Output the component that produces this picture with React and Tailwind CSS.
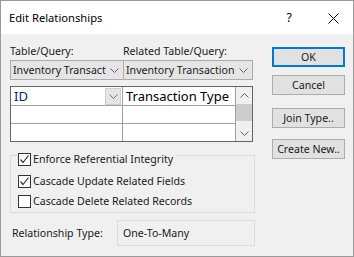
import React from "react";

const Chevron = ({ down = true, className = "" }) => (
  <svg width="9" height="5" viewBox="0 0 9 5" className={className}>
    <polyline
      points={down ? "0.5,0.5 4.5,4.5 8.5,0.5" : "0.5,4.5 4.5,0.5 8.5,4.5"}
      fill="none"
      stroke="currentColor"
      strokeWidth="1"
    />
  </svg>
);

const Combo = ({ text, width }) => (
  <div className={`${width} h-[20px] flex items-center bg-[#e5e5e5] border border-[#acacac] pl-[2px] pr-[4px]`}>
    <span className="flex-1 min-w-0 overflow-hidden whitespace-nowrap text-[10.6px] leading-[15px] text-[#1a1a1a]">{text}</span>
    <Chevron className="text-[#606060] shrink-0 ml-[3px]" />
  </div>
);

const Check = ({ checked, label, className = "" }) => (
  <div className={`flex items-center ${className}`}>
    <div className="w-[13px] h-[13px] border border-[#333333] bg-white flex items-center justify-center shrink-0">
      {checked && (
        <svg width="11" height="11" viewBox="0 0 11 11">
          <polyline points="1.5,5.5 4,8.5 9.5,1.5" fill="none" stroke="#333333" strokeWidth="1.2" />
        </svg>
      )}
    </div>
    <span className="ml-[2px] pr-[3px] text-[10.6px] leading-none text-[#1a1a1a] bg-[#f0f0f0] whitespace-nowrap">{label}</span>
  </div>
);

const Btn = ({ children, primary, className = "" }) => (
  <div
    className={`w-[73px] h-[20px] flex items-center justify-center bg-[#e1e1e1] text-[10.6px] leading-none text-[#1a1a1a] whitespace-nowrap ${
      primary ? "border-2 border-[#0078d7]" : "border border-[#adadad]"
    } ${className}`}
  >
    {children}
  </div>
);

export default function App() {
  return (
    <div className="w-[354px] h-[257px] border border-[#9a9a9a] bg-[#f0f0f0] flex flex-col font-['Noto_Sans',sans-serif]">
      {/* Title bar */}
      <div className="h-[33px] pt-[2px] bg-white flex items-center shrink-0">
        <span className="ml-[8px] text-[11.2px] text-black">Edit Relationships</span>
        <span className="ml-auto text-[12.5px] text-black">?</span>
        <svg width="11" height="11" viewBox="0 0 11 11" className="ml-[36px] mr-[14px]">
          <path d="M0.5 0.5 L10.5 10.5 M10.5 0.5 L0.5 10.5" stroke="#000" strokeWidth="1" />
        </svg>
      </div>

      {/* Body */}
      <div className="flex flex-1">
        <div className="ml-[9px] w-[245px] flex flex-col">
          <div className="mt-[9px] h-[17px] flex text-[10.6px] leading-[16px] text-[#1a1a1a]">
            <span className="w-[113px]">Table/Query:</span>
            <span>Related Table/Query:</span>
          </div>
          <div className="flex">
            <Combo text="Inventory Transact" width="w-[114px]" />
            <Combo text="Inventory Transaction" width="w-[130px] -ml-px" />
          </div>

          {/* Grid */}
          <div className="mt-[6px] w-[243px] h-[56px] border border-[#646464] bg-white flex">
            <div className="flex flex-col w-[225px]">
              <div className="h-[19px] flex border-b border-[#a0a0a0]">
                <div className="w-[112px] flex items-center border-r border-[#a0a0a0] pl-[3px] pr-[1px]">
                  <span className="flex-1 text-[13px] leading-none text-[#0a246a]">ID</span>
                  <div className="w-[16px] h-[17px] bg-[#e5e5e5] border border-[#cfcfcf] flex items-center justify-center">
                    <Chevron className="text-[#707070]" />
                  </div>
                </div>
                <div className="flex-1 flex items-center pl-[3px] border-r border-[#a0a0a0]">
                  <span className="text-[13px] leading-none text-black whitespace-nowrap">Transaction Type</span>
                </div>
              </div>
              <div className="h-[18px] flex border-b border-[#a0a0a0]">
                <div className="w-[112px] border-r border-[#a0a0a0]" />
                <div className="flex-1 border-r border-[#a0a0a0]" />
              </div>
              <div className="flex-1 flex">
                <div className="w-[112px] border-r border-[#a0a0a0]" />
                <div className="flex-1 border-r border-[#a0a0a0]" />
              </div>
            </div>
            <div className="flex-1 bg-[#f0f0f0] flex flex-col items-center">
              <Chevron down={false} className="mt-[6px] text-[#606060]" />
              <div className="mt-[6px] w-full h-[17px] bg-[#cdcdcd]" />
              <Chevron className="mt-auto mb-[5px] text-[#606060]" />
            </div>
          </div>

          {/* Group box */}
          <div className="mt-[13px] h-[58px] border border-[#dcdcdc] flex flex-col pl-[7px]">
            <Check checked label="Enforce Referential Integrity" className="-mt-[3px]" />
            <Check checked label="Cascade Update Related Fields" className="mt-[9px]" />
            <Check label="Cascade Delete Related Records" className="mt-[7px]" />
          </div>

          {/* Relationship type */}
          <div className="mt-[7px] h-[26px] flex items-center">
            <span className="ml-[2px] w-[105px] text-[10.6px] leading-none text-[#1a1a1a]">Relationship Type:</span>
            <div className="w-[138px] h-[26px] border border-[#dcdcdc] flex items-center pl-[5px]">
              <span className="text-[10.6px] leading-none text-[#1a1a1a]">One-To-Many</span>
            </div>
          </div>
        </div>

        {/* Buttons */}
        <div className="ml-[17px] flex flex-col">
          <Btn primary className="mt-[13px]">OK</Btn>
          <Btn className="mt-[8px]">Cancel</Btn>
          <Btn className="mt-[13px]">Join Type..</Btn>
          <Btn className="mt-[11px]">Create New..</Btn>
        </div>
      </div>
    </div>
  );
}
